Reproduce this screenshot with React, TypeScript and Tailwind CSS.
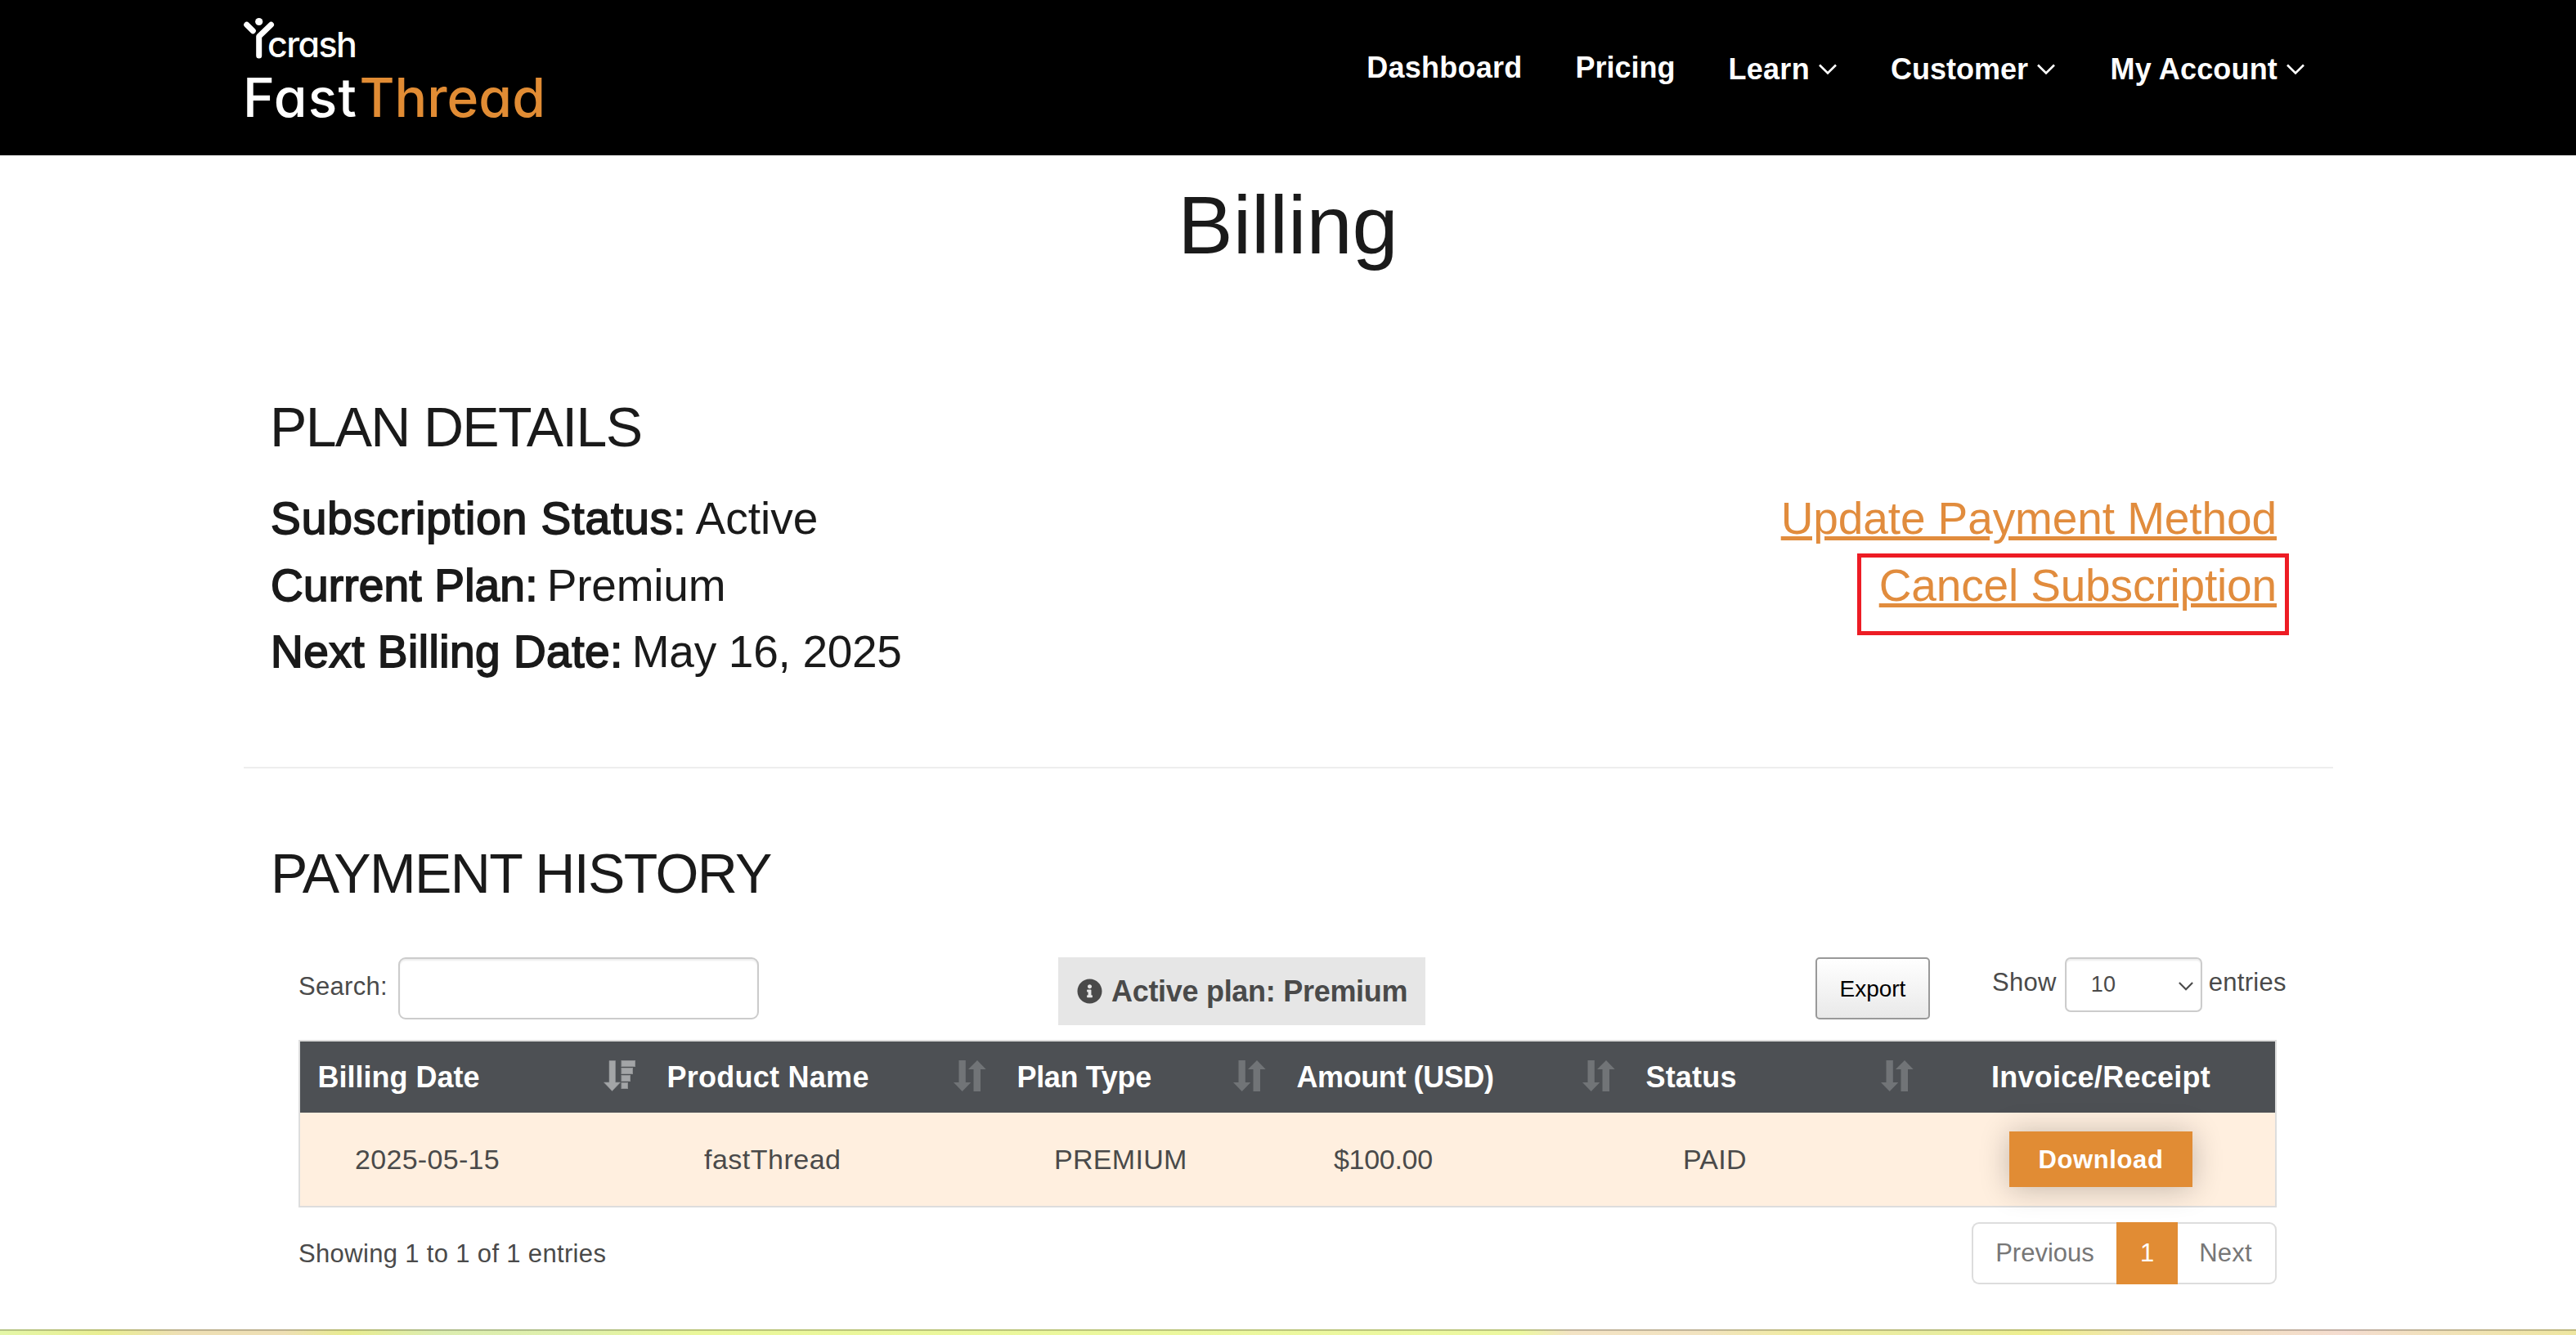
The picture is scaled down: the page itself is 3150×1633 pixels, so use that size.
import React from 'react';
import { FaInfoCircle } from 'react-icons/fa';

function ChevronDown({ className }: { className: string }) {
  return (
    <svg className={className} viewBox="0 0 24 16" fill="none" stroke="currentColor" strokeWidth="2.6">
      <path d="M2 2.5 L12 12.5 L22 2.5" />
    </svg>
  );
}

function SortIcon() {
  return (
    <svg className="h-[38px] w-[40px] fill-[#717477]" viewBox="0 0 40 38">
      <path d="M6.5 0 H14.8 V27 H21.3 L10.7 38 L0 27 H6.5 Z" />
      <path d="M29 0 L39.7 11 H33 V38 H24.5 V11 H18 Z" />
    </svg>
  );
}

function SortDescIcon() {
  return (
    <svg className="h-[38px] w-[40px] fill-[#a3a5a7] stroke-[#8f9193]" viewBox="0 0 40 38">
      <path d="M7 0.5 H14.5 V27 H20.5 L10.5 37.5 L0.5 27 H7 Z" strokeWidth="0.6" />
      <rect x="22" y="0.5" width="16.5" height="7" />
      <rect x="22" y="9.5" width="13.5" height="7" />
      <rect x="22" y="18.5" width="10.5" height="7" />
      <rect x="22" y="27.5" width="7.5" height="7" />
    </svg>
  );
}

function Logo() {
  return (
    <div className="ml-[297px] pt-[34px] font-[Inter] font-medium text-white [font-feature-settings:'cv11']">
      <div className="relative h-[40px] pl-[30px] text-[43px] leading-[40px] tracking-[-1.6px]">
        <svg className="absolute -top-[14px] left-[0px] h-[54px] w-[42px]" viewBox="0 0 42 54" fill="none" stroke="white" strokeWidth="7" strokeLinecap="round">
          <circle cx="19.7" cy="6.5" r="4.6" fill="white" stroke="none" />
          <path d="M4.7 10.2 L12.3 17.8" />
          <path d="M34.5 10.2 L19.7 24.6 V48" strokeLinejoin="round" />
        </svg>
        crash
      </div>
      <div className="mt-[12px] flex text-[66px] leading-[66px]">
        <span className="tracking-[1.2px]">Fast</span>
        <span className="ml-[2.4px] text-[#e18c34]">Thread</span>
      </div>
    </div>
  );
}

function Header() {
  return (
    <header className="flex h-[190px] items-start bg-black text-white">
      <Logo />
      <nav className="mr-[331px] ml-auto flex items-start gap-[65px] pt-[63px] text-[36px] leading-[40px] font-bold">
        <a className="tracking-[0.24px]">Dashboard</a>
        <a>Pricing</a>
        <a className="flex items-center pt-[2px] tracking-[0.3px]">
          Learn
          <ChevronDown className="ml-[10px] h-[16px] w-[24px]" />
        </a>
        <a className="flex items-center pt-[2px]">
          Customer
          <ChevronDown className="ml-[10px] h-[16px] w-[24px]" />
        </a>
        <a className="ml-[1.6px] flex items-center pt-[2px] tracking-[0.17px]">
          My Account
          <ChevronDown className="ml-[10px] h-[16px] w-[24px]" />
        </a>
      </nav>
    </header>
  );
}

function PlanDetails() {
  return (
    <section className="pr-[366px] pl-[330px]">
      <h2 className="mt-[147px] text-[68px] leading-[80px] tracking-[-1.72px]">PLAN DETAILS</h2>
      <div className="mt-[32px] flex justify-between pl-[1px] text-[55px] leading-[81.5px]">
        <div>
          <div className="flex">
            <span className="tracking-[0.97px] [-webkit-text-stroke:1.8px_#1a1a1a]">Subscription Status:</span>
            <span className="ml-[11px]">Active</span>
          </div>
          <div className="flex">
            <span className="tracking-[0.2px] [-webkit-text-stroke:1.8px_#1a1a1a]">Current Plan:</span>
            <span className="ml-[11px] tracking-[-0.2px]">Premium</span>
          </div>
          <div className="flex">
            <span className="tracking-[0.5px] [-webkit-text-stroke:1.8px_#1a1a1a]">Next Billing Date:</span>
            <span className="ml-[11px] tracking-[-0.3px]">May 16, 2025</span>
          </div>
        </div>
        <div className="flex flex-col items-end text-[#e18c3d]">
          <a className="tracking-[-0.1px] underline decoration-[5px] underline-offset-[3px]">Update Payment Method</a>
          <div className="relative">
            <a className="tracking-[-0.15px] underline decoration-[5px] underline-offset-[3px]">Cancel Subscription</a>
            <div className="absolute top-[1.5px] -right-[15px] h-[100px] w-[528px] border-[5px] border-[#ed1c24]" />
          </div>
        </div>
      </div>
    </section>
  );
}

function Toolbar() {
  return (
    <div className="mt-[63.5px] flex h-[101px] items-start text-[31px] whitespace-nowrap text-[#4a4a4a]">
      <label className="leading-[71px] tracking-[0.3px]">Search:</label>
      <div className="ml-[13px] h-[76px] w-[441px] shrink-0 rounded-[9px] border-2 border-[#ccc] bg-white shadow-[inset_0_2px_2px_rgba(0,0,0,0.075)]" />
      <div className="ml-[366px] flex h-[83px] w-[449px] shrink-0 items-center bg-[#e6e6e6] pl-[23px] text-[36px] leading-[83px] font-bold tracking-[-0.29px]">
        <FaInfoCircle className="mr-[11px] h-[31px] w-[31px]" />
        Active plan: Premium
      </div>
      <button className="ml-[477px] h-[76px] w-[140px] shrink-0 rounded-[5px] border-2 border-[#999] bg-linear-to-b from-white to-[#e9e9e9] text-[28px] leading-[73px] text-black">
        Export
      </button>
      <span className="ml-[76px] leading-[61px] tracking-[0.3px]">Show</span>
      <div className="ml-[10px] flex h-[67px] w-[168px] shrink-0 items-center justify-between rounded-[7px] border-2 border-[#ccc] pr-[8px] pl-[30px] text-[27px] leading-[63px] tracking-[0.4px] shadow-[inset_0_2px_2px_rgba(0,0,0,0.075)]">
        10
        <ChevronDown className="mt-[3px] h-[13px] w-[20px]" />
      </div>
      <span className="ml-[8px] leading-[61px] tracking-[0.3px]">entries</span>
    </div>
  );
}

const columns = [
  { title: 'Billing Date', value: '2025-05-15', head: '', cell: 'tracking-[0.3px]' },
  { title: 'Product Name', value: 'fastThread', head: 'tracking-[0.26px]', cell: 'tracking-[0.5px]' },
  { title: 'Plan Type', value: 'PREMIUM', head: 'tracking-[-0.34px]', cell: 'tracking-[0.3px]' },
  { title: 'Amount (USD)', value: '$100.00', head: 'tracking-[-0.41px]', cell: 'tracking-[-0.3px]' },
  { title: 'Status', value: 'PAID', head: 'tracking-[0.18px]', cell: 'tracking-[0.2px]' },
];

function HistoryTable() {
  return (
    <div className="w-[2419px] border-2 border-[#ddd]">
      <div className="grid h-[87px] grid-cols-[427px_428px_342px_427px_365px_426px] bg-[#4d5054] text-[36px] leading-[87px] font-bold text-white">
        {columns.map((c, i) => (
          <div key={c.title} className="flex justify-between pr-[16px] pl-[21.5px]">
            <span className={c.head}>{c.title}</span>
            <span className="pt-[23px]">{i === 0 ? <SortDescIcon /> : <SortIcon />}</span>
          </div>
        ))}
        <div className="text-center tracking-[0.26px]">Invoice/Receipt</div>
      </div>
      <div className="grid h-[114px] grid-cols-[427px_428px_342px_427px_365px_426px] bg-[#ffefdf] text-[34px] leading-[114px] text-[#4a4a4a]">
        {columns.map((c) => (
          <div key={c.title} className="pl-[67px]">
            <span className={c.cell}>{c.value}</span>
          </div>
        ))}
        <div className="flex items-center justify-center">
          <button className="h-[68px] w-[224px] bg-[#e18c34] text-[31px] leading-[70px] font-bold tracking-[0.6px] text-white shadow-[0_2px_36px_rgba(0,0,0,0.24)]">
            Download
          </button>
        </div>
      </div>
    </div>
  );
}

function Pagination() {
  return (
    <div className="mt-[18px] flex h-[76px] justify-between pr-[366px] text-[31px] leading-[76px]">
      <div className="pt-[1px] tracking-[0.34px] text-[#4a4a4a]">Showing 1 to 1 of 1 entries</div>
      <div className="flex text-center text-[#777]">
        <div className="w-[177px] rounded-l-[9px] border-2 border-r-0 border-[#ddd] leading-[72px]">Previous</div>
        <div className="w-[75px] bg-[#e18c34] text-white">1</div>
        <div className="w-[121px] rounded-r-[9px] border-2 border-l-0 border-[#ddd] pr-[2px] leading-[72px] tracking-[0.2px]">Next</div>
      </div>
    </div>
  );
}

export default function App() {
  return (
    <div className="h-[1633px] w-[3150px] overflow-hidden bg-white font-['Liberation_Sans',Arial,sans-serif] text-[#1a1a1a]">
      <Header />
      <main>
        <h1 className="mt-[25px] text-center text-[101px] leading-[120px]">Billing</h1>
        <PlanDetails />
        <hr className="mt-[99.5px] mr-[297px] ml-[298px] border-t-2 border-[#eee]" />
        <h2 className="mt-[87.5px] ml-[331px] text-[68px] leading-[80px] tracking-[-1.63px]">PAYMENT HISTORY</h2>
        <section className="pl-[365px]">
          <Toolbar />
          <HistoryTable />
          <Pagination />
        </section>
      </main>
      <div className="mt-[55px] h-[7px] border-t-2 border-black/20 bg-[linear-gradient(90deg,#e4f7a8_0%,#e9ee92_4%,#eedfb4_7%,#eedfb4_11%,#e8ec90_13.5%,#dcedb0_17%,#dff0ac_22%,#eaf79a_27%,#ecf8a0_59%,#f3e3c4_61%,#f2e3c0_66%,#f0eca0_70%,#e8eda0_75%,#eeef8e_79%,#f2e2b8_84%,#f4dcd0_91%,#f1e2b8_95%,#eee6a0_100%)]" />
    </div>
  );
}
